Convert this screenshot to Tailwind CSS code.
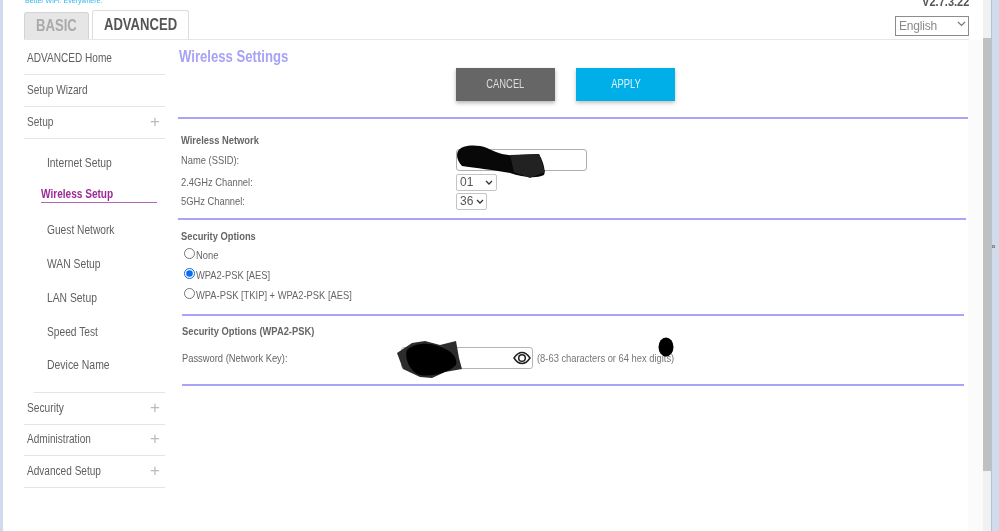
<!DOCTYPE html>
<html>
<head>
<meta charset="utf-8">
<script src="https://cdn.jsdelivr.net/npm/@tailwindcss/browser@4"></script>
<title>Wireless Settings</title>
</head>
<body class="bg-white">
<div class="flex w-[999px] h-[531px] overflow-hidden bg-white font-['Liberation_Sans',Arial,sans-serif] text-[#666] blur-[0.4px]">
  <div class="w-[3px] shrink-0 bg-[#cfdbec]"></div>

  <div class="relative flex-1 min-w-0 flex flex-col pl-[21px]">
    <!-- header -->
    <div class="relative h-[40px] w-[945px] shrink-0 border-b-[1.5px] border-[#e6e6e6] flex items-end">
      <div class="absolute left-[1px] top-[-4px] text-[7px] leading-[9px] text-[#35b6ee]">Better WiFi. Everywhere.</div>
      <div class="h-[27px] w-[65px] rounded-t-[3px] border border-b-0 border-[#d4d4d4] bg-[#e6e6e6] flex items-center justify-center text-[#aaa]"><span class="inline-block scale-x-[.77] text-[17px] leading-[20px] font-bold">BASIC</span></div>
      <div class="ml-[3px] h-[29px] w-[97px] rounded-t-[3px] border border-b-0 border-[#dcdcdc] bg-white flex items-center justify-center text-[#555]"><span class="inline-block scale-x-[.77] text-[17px] leading-[20px] font-bold">ADVANCED</span></div>
      <div class="absolute right-[0px] top-[-5px] text-[12px] leading-[14px] font-bold text-[#555] origin-right scale-x-[.92]">V2.7.3.22</div>
      <div class="absolute right-[0px] top-[13px] w-[74px] h-[20px]">
        <select class="appearance-none w-full h-full border border-[#8c8c8c] bg-white text-[12px] text-[#8a8a8a] pl-[3px] pb-[2px] tracking-[-0.2px]"><option>English</option></select>
        <svg class="absolute right-[3px] top-[8px]" width="9" height="6" viewBox="0 0 9 6" fill="none" stroke="#777" stroke-width="1.200"><path d="M1 1L4.500 4.500L8 1"/></svg>
      </div>
    </div>

    <div class="flex flex-1 min-h-0">
      <!-- sidebar -->
      <nav class="w-[141px] shrink-0 pt-[3px] text-[12px] text-[#606060]">
        <div class="h-[32px] pb-[2px] border-b-[1.5px] border-[#e4e4e4] flex items-center pl-[3px]"><span class="inline-block origin-left scale-x-[.84] whitespace-nowrap">ADVANCED Home</span></div>
        <div class="h-[32px] pb-[2px] border-b-[1.5px] border-[#e4e4e4] flex items-center pl-[3px]"><span class="inline-block origin-left scale-x-[.84] whitespace-nowrap">Setup Wizard</span></div>
        <div class="h-[32px] pb-[2px] border-b-[1.5px] border-[#e4e4e4] flex items-center justify-between pl-[3px] pr-[5px]"><span class="inline-block origin-left scale-x-[.84] whitespace-nowrap">Setup</span><span class="text-[17px] font-light text-[#bbb]">+</span></div>
        <div class="pt-[7px] pb-[10px]">
          <div class="h-[34px] flex items-center pl-[23px]"><span class="inline-block origin-left scale-x-[.86] whitespace-nowrap">Internet Setup</span></div>
          <div class="mt-[4px] ml-[17px] mr-[8px] h-[19px] border-b border-[#b565b5] font-bold text-[#9b2b93] flex items-center pt-[2px]"><span class="inline-block origin-left scale-x-[.84] whitespace-nowrap">Wireless Setup</span></div>
          <div class="mt-[10px] h-[34px] flex items-center pl-[23px]"><span class="inline-block origin-left scale-x-[.85] whitespace-nowrap">Guest Network</span></div>
          <div class="h-[34px] flex items-center pl-[23px]"><span class="inline-block origin-left scale-x-[.86] whitespace-nowrap">WAN Setup</span></div>
          <div class="h-[34px] flex items-center pl-[23px]"><span class="inline-block origin-left scale-x-[.86] whitespace-nowrap">LAN Setup</span></div>
          <div class="h-[33px] flex items-center pl-[23px]"><span class="inline-block origin-left scale-x-[.85] whitespace-nowrap">Speed Test</span></div>
          <div class="h-[34px] flex items-center pl-[23px]"><span class="inline-block origin-left scale-x-[.87] whitespace-nowrap">Device Name</span></div>
        </div>
        <div class="ml-[10px] h-[1px] bg-[#e4e4e4]"></div>
        <div class="h-[32px] pb-[2px] border-b-[1.5px] border-[#e4e4e4] flex items-center justify-between pl-[3px] pr-[5px]"><span class="inline-block origin-left scale-x-[.85] whitespace-nowrap">Security</span><span class="text-[17px] font-light text-[#bbb]">+</span></div>
        <div class="h-[31px] pb-[2px] border-b-[1.5px] border-[#e4e4e4] flex items-center justify-between pl-[3px] pr-[5px]"><span class="inline-block origin-left scale-x-[.84] whitespace-nowrap">Administration</span><span class="text-[17px] font-light text-[#bbb]">+</span></div>
        <div class="h-[32px] pb-[2px] border-b-[1.5px] border-[#e4e4e4] flex items-center justify-between pl-[3px] pr-[5px]"><span class="inline-block origin-left scale-x-[.84] whitespace-nowrap">Advanced Setup</span><span class="text-[17px] font-light text-[#bbb]">+</span></div>
      </nav>

      <!-- content -->
      <main class="ml-[13px] w-[790px] shrink-0 text-[11px]">
        <h1 class="pt-[6px] h-[28px] pl-[1px] text-[#a7a2f6]"><span class="inline-block origin-left scale-x-[.82] text-[16px] leading-[22px] font-bold whitespace-nowrap">Wireless Settings</span></h1>
        <div class="flex gap-[21px] pl-[278px]">
          <button class="w-[99px] h-[33px] pb-[2px] bg-[#666] text-[#ddd] shadow-[0_2px_4px_rgba(0,0,0,0.3)]"><span class="inline-block scale-x-[.78] text-[12px]">CANCEL</span></button>
          <button class="w-[99px] h-[33px] pb-[2px] bg-[#00aee8] text-[#dff4fc] shadow-[0_2px_4px_rgba(0,0,0,0.25)]"><span class="inline-block scale-x-[.78] text-[12px]">APPLY</span></button>
        </div>
        <div class="mt-[16px] h-[2px] bg-[#a9a4f8]"></div>

        <section class="pl-[3px] pt-[12px] pb-[9px]">
          <h2 class="h-[18px] leading-[18px]"><span class="inline-block origin-left scale-x-[.85] font-bold whitespace-nowrap">Wireless Network</span></h2>
          <div class="grid grid-cols-[275px_1fr] items-center h-[22px]">
            <span class="inline-block origin-left scale-x-[.85] whitespace-nowrap">Name (SSID):</span>
            <input class="w-[131px] h-[22px] rounded-[3px] border border-[#b3aeae] bg-white" />
          </div>
          <div class="mt-[3px] grid grid-cols-[275px_1fr] items-center h-[16px]">
            <span class="inline-block origin-left scale-x-[.85] whitespace-nowrap">2.4GHz Channel:</span>
            <div class="relative w-[41px] h-[17px]">
              <select class="appearance-none w-full h-full rounded-[2px] border border-[#c4c4c4] bg-white text-[12px] leading-[15px] text-[#555] pl-[3px]"><option>01</option></select>
              <svg class="absolute right-[4px] top-[6px]" width="8" height="6" viewBox="0 0 8 6" fill="none" stroke="#333" stroke-width="1.300"><path d="M1 1L4 4L7 1"/></svg>
            </div>
          </div>
          <div class="mt-[3px] grid grid-cols-[275px_1fr] items-center h-[16px]">
            <span class="inline-block origin-left scale-x-[.85] whitespace-nowrap">5GHz Channel:</span>
            <div class="relative w-[31px] h-[17px]">
              <select class="appearance-none w-full h-full rounded-[2px] border border-[#c4c4c4] bg-white text-[12px] leading-[15px] text-[#555] pl-[3px]"><option>36</option></select>
              <svg class="absolute right-[3px] top-[6px]" width="8" height="6" viewBox="0 0 8 6" fill="none" stroke="#333" stroke-width="1.300"><path d="M1 1L4 4L7 1"/></svg>
            </div>
          </div>
        </section>
        <div class="w-[788px] h-[2px] bg-[#a9a4f8]"></div>

        <section class="pl-[3px] pt-[7px] pb-[9px]">
          <h2 class="h-[18px] leading-[18px]"><span class="inline-block origin-left scale-x-[.85] font-bold whitespace-nowrap">Security Options</span></h2>
          <label class="mt-[1px] flex items-center h-[19px] pl-[3px] gap-[1px]"><input type="radio" name="s" class="w-[11px] h-[11px] m-0 -translate-y-[2px]" /><span class="inline-block origin-left scale-x-[.85] whitespace-nowrap">None</span></label>
          <label class="flex items-center h-[20px] pl-[3px] gap-[1px]"><input type="radio" name="s" checked class="w-[11px] h-[11px] m-0 -translate-y-[2px] accent-[#0a6cf0]" /><span class="inline-block origin-left scale-x-[.85] whitespace-nowrap">WPA2-PSK [AES]</span></label>
          <label class="flex items-center h-[20px] pl-[3px] gap-[1px]"><input type="radio" name="s" class="w-[11px] h-[11px] m-0 -translate-y-[2px]" /><span class="inline-block origin-left scale-x-[.85] whitespace-nowrap">WPA-PSK [TKIP] + WPA2-PSK [AES]</span></label>
        </section>
        <div class="ml-[4px] w-[782px] h-[2px] bg-[#a9a4f8]"></div>

        <section class="pl-[4px] pt-[6px] pb-[15px]">
          <h2 class="h-[18px] leading-[18px]"><span class="inline-block origin-left scale-x-[.85] font-bold whitespace-nowrap">Security Options (WPA2-PSK)</span></h2>
          <div class="mt-[7px] flex items-center h-[22px]">
            <span class="w-[219px] shrink-0"><span class="inline-block origin-left scale-x-[.85] whitespace-nowrap">Password (Network Key):</span></span>
            <div class="relative w-[132px] h-[22px] rounded-[3px] border border-[#b9b4b4] bg-white">
              <svg class="absolute right-[1px] top-[2px]" width="18" height="16" viewBox="0 0 18 16" fill="none" stroke="#222" stroke-width="1.500"><path d="M1 8C4 3.500 6.500 2.500 9 2.500S14 3.500 17 8C14 12.500 11.500 13.500 9 13.500S4 12.500 1 8Z"/><circle cx="9" cy="8" r="3.300"/></svg>
            </div>
            <span class="ml-[4px] text-[#777]"><span class="inline-block origin-left scale-x-[.85] whitespace-nowrap">(8-63 characters or 64 hex digits)</span></span>
          </div>
        </section>
        <div class="ml-[4px] w-[782px] h-[2px] bg-[#a9a4f8]"></div>
      </main>
      <div class="flex-1 bg-[#fbfbfb]"></div>
    </div>

    <!-- scribbles over the form -->
    <svg class="absolute left-[-3px] top-0 pointer-events-none" width="988" height="531" viewBox="0 0 988 531">
      <path d="M458 151C462 145 476 144 487 148C497 153 505 156 518 155L539 154C543 161 546 171 544 175C535 179 522 177 510 173C495 170 475 168 462 166C457 161 456 155 458 151Z" fill="#080808"/>
      <path d="M510 155L539 154L545 172L530 178L514 172Z" fill="#222"/>
      <path d="M397 353L412 343L425 341L440 345L456 341L459 358L462 369L445 372L432 378L420 377L403 369Z" fill="#2c2c2c"/>
      <path d="M407 350C414 343 428 342 438 346C452 350 458 358 456 365C448 373 432 377 420 375C410 372 404 358 407 350Z" fill="#000"/>
      <ellipse cx="666" cy="347" rx="7.500" ry="9.500" fill="#000"/>
    </svg>
  </div>

  <div class="w-[8px] shrink-0 flex flex-col">
    <div class="h-[38px] bg-[#f1f1f1]"></div>
    <div class="h-[433px] bg-[#c0c0c0]"></div>
    <div class="flex-1 bg-[#f1f1f1]"></div>
  </div>
  <div class="relative w-[8px] shrink-0 bg-[#d0dcec] border-l border-[#b4c2d6]">
    <div class="absolute left-[0px] top-[245px] w-[3px] h-[3px] border border-[#888] bg-[#ddd]"></div>
  </div>
</div>
</body>
</html>
